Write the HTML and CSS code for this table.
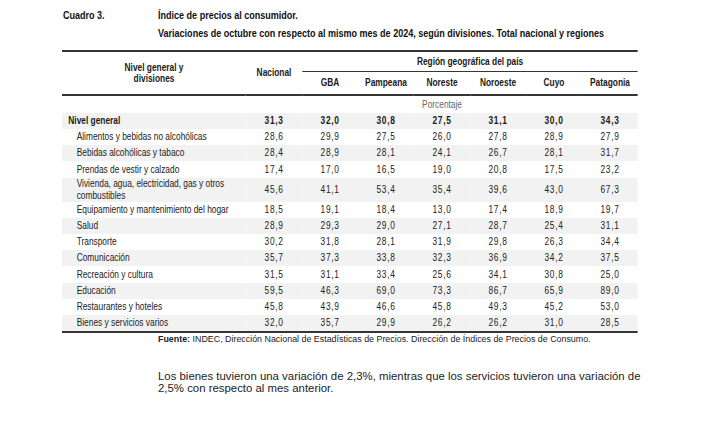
FILE: index.html
```html
<!DOCTYPE html>
<html lang="es">
<head>
<meta charset="utf-8">
<title>Cuadro 3</title>
<link rel="stylesheet" href="styles.css">
</head>
<body>
<div class="page">
  <header class="caption">
    <div class="caption-num">Cuadro 3.</div>
    <div class="caption-title">
      <div>Índice de precios al consumidor.</div>
      <div>Variaciones de octubre con respecto al mismo mes de 2024, según divisiones. Total nacional y regiones</div>
    </div>
  </header>

  <table class="data">
    <colgroup>
      <col class="c-label">
      <col class="c-num"><col class="c-num"><col class="c-num"><col class="c-num">
      <col class="c-num"><col class="c-num"><col class="c-num">
    </colgroup>
    <thead>
      <tr class="h1">
        <th rowspan="2" class="h-label">Nivel general y<br>divisiones</th>
        <th rowspan="2" class="h-nac">Nacional</th>
        <th colspan="6" class="h-region">Región geográfica del país</th>
      </tr>
      <tr class="h2">
        <th>GBA</th><th>Pampeana</th><th>Noreste</th><th>Noroeste</th><th>Cuyo</th><th>Patagonia</th>
      </tr>
    </thead>
    <tbody>
      <tr class="unit"><td></td><td colspan="7">Porcentaje</td></tr>
      <tr class="total shade"><td class="lbl">Nivel general</td><td>31,3</td><td>32,0</td><td>30,8</td><td>27,5</td><td>31,1</td><td>30,0</td><td>34,3</td></tr>
      <tr><td class="lbl sub">Alimentos y bebidas no alcohólicas</td><td>28,6</td><td>29,9</td><td>27,5</td><td>26,0</td><td>27,8</td><td>28,9</td><td>27,9</td></tr>
      <tr class="shade"><td class="lbl sub">Bebidas alcohólicas y tabaco</td><td>28,4</td><td>28,9</td><td>28,1</td><td>24,1</td><td>26,7</td><td>28,1</td><td>31,7</td></tr>
      <tr><td class="lbl sub">Prendas de vestir y calzado</td><td>17,4</td><td>17,0</td><td>16,5</td><td>19,0</td><td>20,8</td><td>17,5</td><td>23,2</td></tr>
      <tr class="shade tall"><td class="lbl sub">Vivienda, agua, electricidad, gas y otros combustibles</td><td>45,6</td><td>41,1</td><td>53,4</td><td>35,4</td><td>39,6</td><td>43,0</td><td>67,3</td></tr>
      <tr><td class="lbl sub">Equipamiento y mantenimiento del hogar</td><td>18,5</td><td>19,1</td><td>18,4</td><td>13,0</td><td>17,4</td><td>18,9</td><td>19,7</td></tr>
      <tr class="shade"><td class="lbl sub">Salud</td><td>28,9</td><td>29,3</td><td>29,0</td><td>27,1</td><td>28,7</td><td>25,4</td><td>31,1</td></tr>
      <tr><td class="lbl sub">Transporte</td><td>30,2</td><td>31,8</td><td>28,1</td><td>31,9</td><td>29,8</td><td>26,3</td><td>34,4</td></tr>
      <tr class="shade"><td class="lbl sub">Comunicación</td><td>35,7</td><td>37,3</td><td>33,8</td><td>32,3</td><td>36,9</td><td>34,2</td><td>37,5</td></tr>
      <tr><td class="lbl sub">Recreación y cultura</td><td>31,5</td><td>31,1</td><td>33,4</td><td>25,6</td><td>34,1</td><td>30,8</td><td>25,0</td></tr>
      <tr class="shade"><td class="lbl sub">Educación</td><td>59,5</td><td>46,3</td><td>69,0</td><td>73,3</td><td>86,7</td><td>65,9</td><td>89,0</td></tr>
      <tr><td class="lbl sub">Restaurantes y hoteles</td><td>45,8</td><td>43,9</td><td>46,6</td><td>45,8</td><td>49,3</td><td>45,2</td><td>53,0</td></tr>
      <tr class="shade"><td class="lbl sub">Bienes y servicios varios</td><td>32,0</td><td>35,7</td><td>29,9</td><td>26,2</td><td>26,2</td><td>31,0</td><td>28,5</td></tr>
    </tbody>
  </table>

  <p class="source"><strong>Fuente:</strong> INDEC, Dirección Nacional de Estadísticas de Precios. Dirección de Índices de Precios de Consumo.</p>

  <p class="note">Los bienes tuvieron una variación de 2,3%, mientras que los servicios tuvieron una variación de 2,5% con respecto al mes anterior.</p>
</div>
</body>
</html>
```

FILE: styles.css
```css
* { box-sizing: border-box; }

html, body {
  margin: 0;
  padding: 0;
  background: #ffffff;
}

body {
  font-family: "Liberation Sans", Arial, sans-serif;
  color: #222222;
}

/* The report uses a condensed Arial; it is reproduced by
   horizontally condensing Liberation Sans (same metrics as Arial). */
.page {
  width: 728px;
  padding: 6px 0 0 62px;
  overflow: hidden;
}

.caption {
  display: grid;
  grid-template-columns: 115.9px auto;
  margin-left: 1px;
  font-weight: 700;
  font-size: 11px;
  line-height: 18px;
  color: #111111;
  transform: scaleX(0.82);
  transform-origin: 0 0;
  white-space: nowrap;
}

.data {
  width: 702.44px;
  margin-top: 8px;
  border-collapse: separate;
  border-spacing: 0;
  table-layout: fixed;
  border-top: 2px solid #353535;
  border-bottom: 2px solid #353535;
  font-size: 10.2px;
  line-height: 12px;
  color: #222222;
  transform: scaleX(0.82);
  transform-origin: 0 0;
}

.c-label { width: 224.44px; }
.c-num { width: 68.29px; }

.data th {
  padding: 0;
  font-weight: 700;
  text-align: center;
  vertical-align: middle;
  color: #1a1a1a;
}

.data tr.h1 { height: 20px; }
.data tr.h2 { height: 24px; }

.data th.h-label {
  line-height: 11px;
  border-bottom: 2px solid #353535;
}

.data th.h-nac,
.data tr.h2 th {
  border-bottom: 2px solid #353535;
}

.data th.h-region {
  border-bottom: 1px solid #353535;
}

.data td {
  padding: 0;
  text-align: center;
  vertical-align: middle;
  letter-spacing: 0.8px;
}

.data tbody tr { height: 16.2px; }

.data tr.unit { height: 16.5px; }
.data tr.unit td {
  color: #666666;
  letter-spacing: 0;
  padding-top: 1px;
}

.data tr.total { height: 16.6px; }
.data tr.total td {
  font-weight: 700;
  color: #1a1a1a;
}

.data tr.tall { height: 24px; }
.data tr.tall td.lbl { line-height: 12px; }

.data td.lbl {
  text-align: left;
  padding-left: 7.7px;
  letter-spacing: 0;
}

.data td.lbl.sub {
  padding-left: 17.9px;
}

.data tr.shade td {
  background: #f2f2f2;
}

.source {
  margin: 0 0 0 96px;
  font-size: 8.9px;
  line-height: 12px;
  color: #222222;
}

.source strong {
  font-weight: 700;
}

.note {
  width: 500px;
  margin: 26px 0 0 96px;
  font-size: 11.4px;
  line-height: 11.8px;
  color: #222222;
}
```
